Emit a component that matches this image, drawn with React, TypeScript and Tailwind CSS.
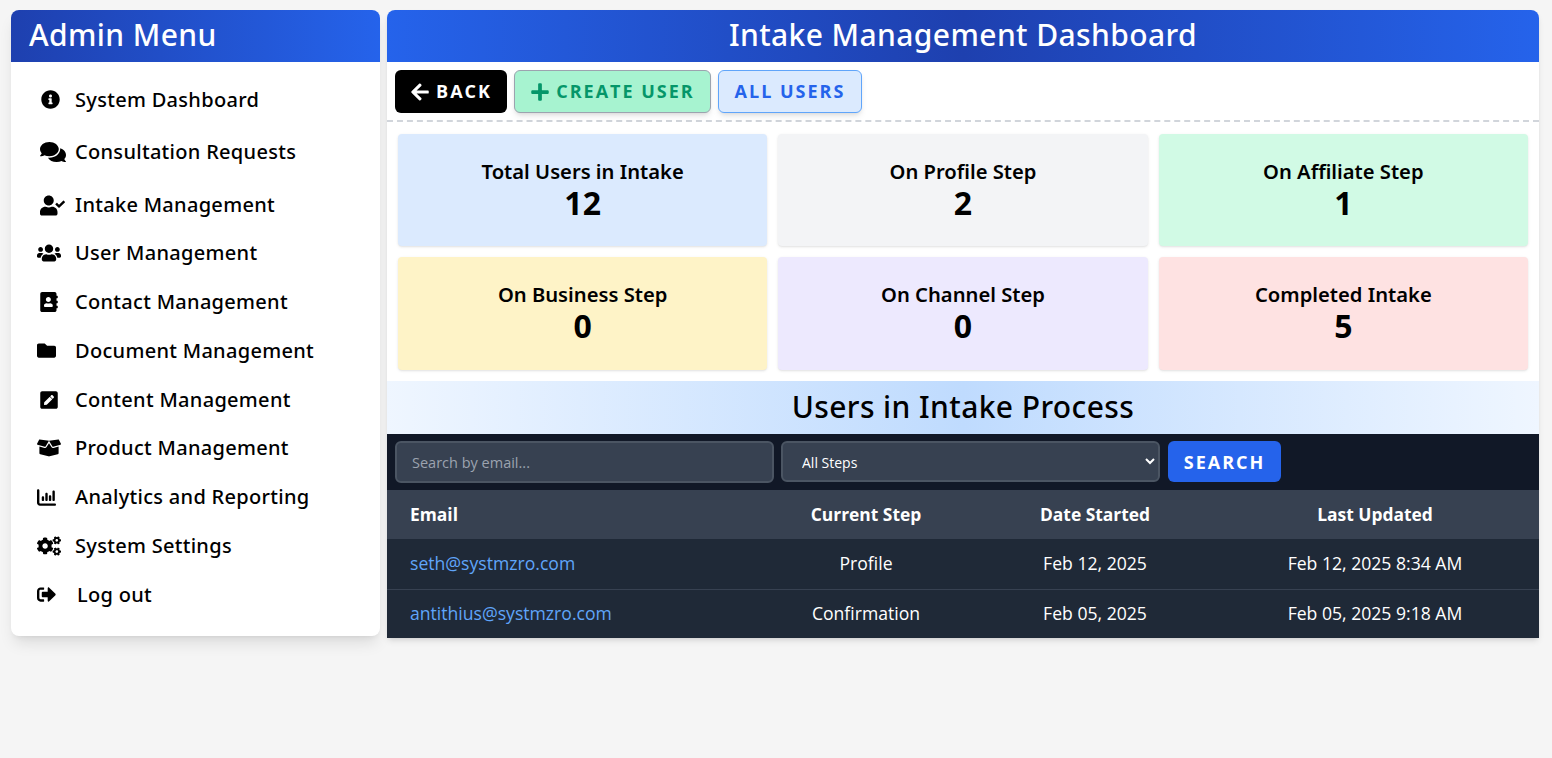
import type { ReactNode } from 'react'
import {
  FaAddressBook, FaArrowLeft, FaBoxOpen, FaCogs, FaComments, FaFolder, FaInfoCircle,
  FaPenSquare, FaPlus, FaSignOutAlt, FaUserCheck, FaUsers,
} from 'react-icons/fa'
import { FaChartColumn } from 'react-icons/fa6'

const head = "font-['Noto_Sans',sans-serif]"
const body = "font-['Open_Sans',sans-serif]"

const menu: { label: string; icon: ReactNode; cls: string }[] = [
  { label: 'System Dashboard', icon: <FaInfoCircle className="ml-[5px] text-[19px]" />, cls: 'h-[49px]' },
  { label: 'Consultation Requests', icon: <FaComments className="ml-[4px] text-[26px]" />, cls: 'mt-[3px] h-[49px]' },
  { label: 'Intake Management', icon: <FaUserCheck className="ml-[4px] text-[25px]" />, cls: 'mt-[5px] h-[48px]' },
  { label: 'User Management', icon: <FaUsers className="ml-[1px] text-[24px]" />, cls: 'h-[48.75px]' },
  { label: 'Contact Management', icon: <FaAddressBook className="ml-[3px] text-[20px]" />, cls: 'h-[48.75px]' },
  { label: 'Document Management', icon: <FaFolder className="ml-[1px] text-[19px]" />, cls: 'h-[48.75px]' },
  { label: 'Content Management', icon: <FaPenSquare className="ml-[3px] text-[20px]" />, cls: 'h-[48.75px]' },
  { label: 'Product Management', icon: <FaBoxOpen className="ml-[1px] text-[24px]" />, cls: 'h-[48.75px]' },
  { label: 'Analytics and Reporting', icon: <FaChartColumn className="ml-[1px] text-[19px]" />, cls: 'h-[48.75px]' },
  { label: 'System Settings', icon: <FaCogs className="ml-[1px] text-[24px]" />, cls: 'h-[48.75px]' },
  { label: 'Log out', icon: <FaSignOutAlt className="ml-[1px] text-[19px]" />, cls: 'h-[48.75px]' },
]

const stats = [
  { label: 'Total Users in Intake', value: 12, bg: 'bg-[#dbeafe] h-[112px]' },
  { label: 'On Profile Step', value: 2, bg: 'bg-[#f3f4f6] h-[112px]' },
  { label: 'On Affiliate Step', value: 1, bg: 'bg-[#d1fae5] h-[112px]' },
  { label: 'On Business Step', value: 0, bg: 'bg-[#fef3c7] h-[113px]' },
  { label: 'On Channel Step', value: 0, bg: 'bg-[#ede9fe] h-[113px]' },
  { label: 'Completed Intake', value: 5, bg: 'bg-[#fee2e2] h-[113px]' },
]

const users = [
  { email: 'seth@systmzro.com', step: 'Profile', started: 'Feb 12, 2025', updated: 'Feb 12, 2025 8:34 AM' },
  { email: 'antithius@systmzro.com', step: 'Confirmation', started: 'Feb 05, 2025', updated: 'Feb 05, 2025 9:18 AM' },
]

export default function App() {
  return (
    <div className={`flex min-h-[758px] items-start gap-[7px] bg-[#f5f5f5] pl-[11px] pr-[13px] pt-[10px] ${body}`}>
      {/* Sidebar */}
      <aside className="h-[626px] w-[369px] shrink-0 overflow-hidden rounded-lg bg-white shadow-[0_10px_15px_-3px_rgba(0,0,0,0.1),0_4px_6px_-4px_rgba(0,0,0,0.1)]">
        <h2 className={`flex h-[52px] items-center bg-gradient-to-r from-[#1e40af] to-[#2563eb] pb-[3px] pl-[18px] text-[30px] font-medium tracking-[0.4px] text-white ${head}`}>
          Admin Menu
        </h2>
        <nav className="pl-[25px] pt-[13px]">
          {menu.map(m => (
            <div key={m.label} className={`flex items-center text-black ${m.cls}`}>
              <span className="flex w-[39px] shrink-0 items-center">{m.icon}</span>
              <span className={`text-[20px] font-medium tracking-[0.3px] ${head} ${m.label === 'Log out' ? 'ml-[2px]' : ''}`}>{m.label}</span>
            </div>
          ))}
        </nav>
      </aside>

      {/* Main panel */}
      <main className="min-w-0 flex-1 overflow-hidden rounded-t-lg bg-white shadow-md">
        <h1 className={`flex h-[52px] items-center justify-center bg-gradient-to-r from-[#2563eb] via-[#1e40af] to-[#2563eb] pb-[3px] text-[30px] font-medium tracking-[0.4px] text-white ${head}`}>
          Intake Management Dashboard
        </h1>

        <div className="flex h-[60px] items-start gap-[7px] border-b-2 border-dashed border-[#d1d5db] pl-[8px] pt-[8px]">
          <button className="flex h-[43px] w-[112px] items-center justify-center gap-[6px] rounded-md bg-black text-[18px] font-bold tracking-[2px] text-white">
            <FaArrowLeft className="text-[20px]" /> BACK
          </button>
          <button className="flex h-[43px] w-[197px] items-center justify-center gap-[6px] rounded-md border border-[#9ca3af] bg-[#a7f3d0] text-[18px] font-bold tracking-[2px] text-[#059669] shadow-md">
            <FaPlus className="text-[20px]" /> CREATE USER
          </button>
          <button className="flex h-[43px] w-[144px] items-center justify-center rounded-md border border-[#60a5fa] bg-[#dbeafe] text-[18px] font-bold tracking-[2px] text-[#2563eb] shadow-md">
            ALL USERS
          </button>
        </div>

        <div className="grid grid-cols-3 gap-[11px] px-[11px] pb-[11px] pt-[12px]">
          {stats.map(s => (
            <div key={s.label} className={`flex flex-col items-center justify-center rounded-[4px] pb-[1px] shadow ${s.bg}`}>
              <div className={`text-[20.2px] leading-[26px] font-semibold text-black ${head}`}>{s.label}</div>
              <div className={`text-[32px] leading-[38px] font-bold text-black ${head}`}>{s.value}</div>
            </div>
          ))}
        </div>

        <h2 className={`flex h-[53px] items-center justify-center bg-gradient-to-r from-[#eff6ff] via-[#bfdbfe] to-[#eff6ff] pb-[3px] text-[30px] font-medium tracking-[0.4px] text-black ${head}`}>
          Users in Intake Process
        </h2>

        <div className="flex h-[56px] items-start gap-[7px] bg-[#111827] pl-[8px] pt-[7px]">
          <input
            placeholder="Search by email..."
            className="h-[42px] w-[379px] rounded-md border-2 border-[#4b5563] bg-[#374151] px-[15px] text-[14.5px] text-white outline-none placeholder:text-[#9ca3af]"
          />
          <select className="h-[41px] w-[379px] rounded-md border-2 border-[#4b5563] bg-[#374151] px-[15px] pt-[2px] text-[14px] text-white outline-none">
            <option>All Steps</option>
          </select>
          <button className="ml-[1px] h-[41px] w-[113px] rounded-md bg-[#2563eb] pt-[2px] text-[18px] font-bold tracking-[2px] text-white">
            SEARCH
          </button>
        </div>

        <table className="w-full table-fixed border-collapse bg-[#1f2937] text-white">
          <thead>
            <tr className="h-[49px] bg-[#374151] text-[17.4px] font-bold">
              <th className="w-[366px] pl-[23px] text-left">Email</th>
              <th className="w-[226px] text-center">Current Step</th>
              <th className="w-[232px] text-center">Date Started</th>
              <th className="text-center">Last Updated</th>
            </tr>
          </thead>
          <tbody className="text-[17.6px]">
            {users.map((u, i) => (
              <tr key={u.email} className={i === 0 ? 'h-[50px] border-b border-[#374151]' : 'h-[49px]'}>
                <td className="pb-[1px] pl-[23px] text-[#60a5fa]">{u.email}</td>
                <td className="pb-[1px] text-center">{u.step}</td>
                <td className="pb-[1px] text-center">{u.started}</td>
                <td className="pb-[1px] text-center">{u.updated}</td>
              </tr>
            ))}
          </tbody>
        </table>
      </main>
    </div>
  )
}
